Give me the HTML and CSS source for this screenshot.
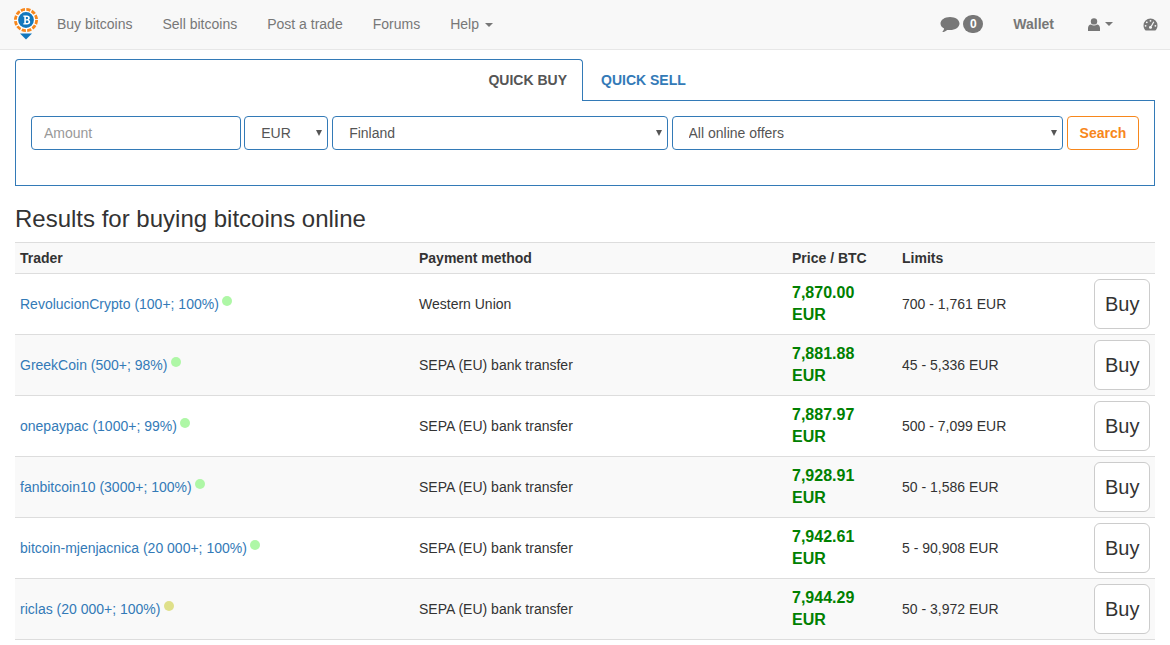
FILE: index.html
```html
<!DOCTYPE html>
<html lang="en">
<head>
<meta charset="utf-8">
<title>Buy bitcoins</title>
<link rel="stylesheet" href="styles.css">
</head>
<body>
<nav class="navbar">
  <a class="logo" href="#" aria-label="Home">
    <svg width="26" height="32" viewBox="0 0 26 32">
      <circle cx="13" cy="12" r="10.600" fill="#fff" stroke="#f7871c" stroke-width="2.800" stroke-dasharray="4.200 1.350"/>
      <circle cx="13" cy="12" r="7.900" fill="#1277bd"/>
      <path d="M10.300 7.600h3.600c1.800 0 2.900.9 2.900 2.300 0 .9-.5 1.600-1.200 1.900.9.3 1.600 1.100 1.600 2.200 0 1.600-1.200 2.500-3.100 2.500h-3.800v-1.200h1v-6.500h-1zm2.600 1.300v2.300h.9c.8 0 1.300-.4 1.300-1.200 0-.7-.5-1.100-1.300-1.100zm0 3.500v2.700h1.100c.9 0 1.500-.5 1.500-1.400s-.6-1.300-1.500-1.300z" fill="#fff"/>
      <path d="M7 25.500h12l-6 6z" fill="#1277bd"/>
    </svg>
  </a>
  <ul class="nav-left">
    <li><a href="#">Buy bitcoins</a></li>
    <li><a href="#">Sell bitcoins</a></li>
    <li><a href="#">Post a trade</a></li>
    <li><a href="#">Forums</a></li>
    <li><a href="#">Help <span class="caret"></span></a></li>
  </ul>
  <ul class="nav-right">
    <li class="nav-chat">
      <svg class="ico-chat" width="20" height="17" viewBox="0 0 20 17"><path d="M10 1C4.700 1 .5 3.900.5 7.500c0 2.100 1.400 3.900 3.600 5.100-.2 1.300-.9 2.500-1.900 3.400 1.900-.1 3.700-.9 5-2.100.9.2 1.800.2 2.800.2 5.300 0 9.500-2.900 9.500-6.600S15.300 1 10 1z" fill="#777"/></svg>
      <span class="badge">0</span>
    </li>
    <li class="nav-wallet"><a href="#">Wallet</a></li>
    <li class="nav-user">
      <svg width="12" height="13" viewBox="0 0 12 13"><circle cx="6" cy="3.400" r="3.200" fill="#777"/><path d="M0 13v-3c0-2 1.300-3.300 3-3.500.8.600 1.900 1 3 1s2.200-.4 3-1c1.700.2 3 1.500 3 3.500v3z" fill="#777"/></svg>
      <span class="caret"></span>
    </li>
    <li class="nav-gauge">
      <svg width="15" height="13" viewBox="0 0 15 13"><path d="M7.500 0.500A7 7 0 0 0 .5 7.500c0 2 .8 3.700 2.100 5h9.800c1.300-1.300 2.100-3 2.100-5a7 7 0 0 0-7-7z" fill="#777"/><circle cx="7.500" cy="2.800" r=".9" fill="#f8f8f8"/><circle cx="3.800" cy="4.300" r=".9" fill="#f8f8f8"/><circle cx="2.600" cy="7.800" r=".9" fill="#f8f8f8"/><circle cx="12.400" cy="7.800" r=".9" fill="#f8f8f8"/><path d="M10.800 3.800L8.300 8.200" stroke="#f8f8f8" stroke-width="1.200"/><circle cx="7.500" cy="9.300" r="1.500" fill="#f8f8f8"/></svg>
    </li>
  </ul>
</nav>

<main class="container">
  <section class="quick">
    <div class="tabs">
      <a class="tab-active" href="#">QUICK BUY</a>
      <div class="tab-rest"><a class="tab" href="#">QUICK SELL</a></div>
    </div>
    <form class="panel">
      <input class="field f-amount" type="text" placeholder="Amount">
      <select class="field pick f-cur"><option>EUR</option></select>
      <select class="field pick f-country"><option>Finland</option></select>
      <select class="field pick f-offers"><option>All online offers</option></select>
      <button class="search" type="button">Search</button>
    </form>
  </section>

  <h3 class="title">Results for buying bitcoins online</h3>

  <table class="results">
    <colgroup>
      <col class="c-trader"><col class="c-pay"><col class="c-price"><col class="c-limit"><col class="c-act">
    </colgroup>
    <thead>
      <tr><th>Trader</th><th>Payment method</th><th>Price / BTC</th><th>Limits</th><th></th></tr>
    </thead>
    <tbody>
      <tr>
        <td><a href="#">RevolucionCrypto (100+; 100%)</a> <span class="dot"></span></td>
        <td>Western Union</td><td class="price">7,870.00 EUR</td><td>700 - 1,761 EUR</td>
        <td class="act"><a class="buy" href="#">Buy</a></td>
      </tr>
      <tr>
        <td><a href="#">GreekCoin (500+; 98%)</a> <span class="dot"></span></td>
        <td>SEPA (EU) bank transfer</td><td class="price">7,881.88 EUR</td><td>45 - 5,336 EUR</td>
        <td class="act"><a class="buy" href="#">Buy</a></td>
      </tr>
      <tr>
        <td><a href="#">onepaypac (1000+; 99%)</a> <span class="dot"></span></td>
        <td>SEPA (EU) bank transfer</td><td class="price">7,887.97 EUR</td><td>500 - 7,099 EUR</td>
        <td class="act"><a class="buy" href="#">Buy</a></td>
      </tr>
      <tr>
        <td><a href="#">fanbitcoin10 (3000+; 100%)</a> <span class="dot"></span></td>
        <td>SEPA (EU) bank transfer</td><td class="price">7,928.91 EUR</td><td>50 - 1,586 EUR</td>
        <td class="act"><a class="buy" href="#">Buy</a></td>
      </tr>
      <tr>
        <td><a href="#">bitcoin-mjenjacnica (20 000+; 100%)</a> <span class="dot"></span></td>
        <td>SEPA (EU) bank transfer</td><td class="price">7,942.61 EUR</td><td>5 - 90,908 EUR</td>
        <td class="act"><a class="buy" href="#">Buy</a></td>
      </tr>
      <tr>
        <td><a href="#">riclas (20 000+; 100%)</a> <span class="dot dot-warm"></span></td>
        <td>SEPA (EU) bank transfer</td><td class="price">7,944.29 EUR</td><td>50 - 3,972 EUR</td>
        <td class="act"><a class="buy" href="#">Buy</a></td>
      </tr>
    </tbody>
  </table>
</main>
</body>
</html>
```
FILE: styles.css
```css
* { box-sizing: border-box; }
html, body { margin: 0; height: 100%; overflow: hidden; }
body {
  font-family: "Liberation Sans", Arial, sans-serif;
  font-size: 14px;
  line-height: 20px;
  color: #333;
  background: #fff;
}
a { text-decoration: none; color: #337ab7; }
ul { list-style: none; margin: 0; padding: 0; }

.navbar {
  display: flex;
  align-items: center;
  height: 50px;
  padding-bottom: 1px;
  background: #f8f8f8;
  border-bottom: 1px solid #e7e7e7;
}
.logo { display: block; width: 26px; height: 32px; margin: 0 3px 0 13px; }
.logo svg { display: block; }
.nav-left { display: flex; }
.nav-left a { display: block; padding: 0 15px; color: #777; }
.caret {
  display: inline-block;
  width: 0;
  height: 0;
  margin-left: 2px;
  vertical-align: middle;
  border-top: 4px solid #777;
  border-left: 4px solid transparent;
  border-right: 4px solid transparent;
}
.nav-right { display: flex; align-items: center; margin-left: auto; padding-right: 12px; color: #777; }
.nav-chat { display: flex; align-items: center; }
.ico-chat { display: block; margin-right: 3px; }
.badge {
  width: 20px;
  height: 18px;
  border-radius: 9px;
  background: #777;
  color: #fff;
  font-size: 12px;
  font-weight: 700;
  line-height: 18px;
  text-align: center;
}
.nav-wallet { margin-left: 30px; }
.nav-wallet a { color: #777; font-weight: 700; }
.nav-user { display: flex; align-items: center; gap: 3px; margin-left: 34px; }
.nav-user svg, .nav-gauge svg { display: block; }
.nav-gauge { margin-left: 30px; }

.container { padding: 9px 15px 0; }

.tabs { display: flex; height: 42px; }
.tab-active {
  width: 568px;
  height: 42px;
  padding: 10px 15px 0 0;
  border: 1px solid #337ab7;
  border-bottom: 0;
  border-radius: 4px 4px 0 0;
  color: #555;
  font-weight: 700;
  text-align: right;
}
.tab-rest { flex: 1; border-bottom: 1px solid #337ab7; }
.tab { display: block; width: 121px; padding: 11px 0 0 18px; font-weight: 700; }
.panel {
  display: flex;
  align-items: flex-start;
  gap: 3.89px;
  height: 85px;
  padding: 15px 15px 0;
  border: 1px solid #337ab7;
  border-top: 0;
}
.field {
  height: 34px;
  padding: 6px 12px;
  border: 1px solid #337ab7;
  border-radius: 4px;
  background: #fff;
  color: #555;
  font: 14px/20px "Liberation Sans", Arial, sans-serif;
  outline: none;
}
.field::placeholder { color: #999; opacity: 1; }
.pick {
  appearance: none;
  -webkit-appearance: none;
  padding-left: 16px;
  background-image: url("data:image/svg+xml,%3Csvg xmlns='http://www.w3.org/2000/svg' width='6' height='6'%3E%3Cpath d='M0 0h6L3 6z' fill='%23555'/%3E%3C/svg%3E");
  background-repeat: no-repeat;
  background-position: right 5px center;
}
.f-amount { width: 210px; margin-right: -0.6px; }
.f-cur { width: 84px; }
.f-country { width: 336px; }
.f-offers { width: 391px; padding-left: 15.500px; }
.search {
  width: 72px;
  height: 34px;
  padding: 0;
  border: 1px solid #f7871c;
  border-radius: 4px;
  background: #fff;
  color: #f7871c;
  font: 700 14px/20px "Liberation Sans", Arial, sans-serif;
}

.title {
  margin: 20px 0 10px;
  font-size: 24px;
  font-weight: 500;
  line-height: 26px;
  color: #333;
}

.results { width: 1140px; border-collapse: collapse; table-layout: fixed; }
.c-trader { width: 399px; }
.c-pay { width: 373px; }
.c-price { width: 110px; }
.c-limit { width: 192px; }
.c-act { width: 66px; }
.results th {
  height: 31px;
  padding: 5px;
  background: #f9f9f9;
  border-top: 1px solid #ddd;
  border-bottom: 1px solid #ddd;
  text-align: left;
  font-weight: 700;
}
.results td {
  padding: 5px;
  border-bottom: 1px solid #ddd;
  vertical-align: middle;
}
.results tbody tr:nth-child(even) { background: #f9f9f9; }
.results .price { font-size: 16px; font-weight: 700; line-height: 22px; color: #008000; }
.results .act { text-align: right; }
.buy {
  display: inline-block;
  vertical-align: middle;
  padding: 10px;
  border: 1px solid #ccc;
  border-radius: 6px;
  background: #fff;
  color: #333;
  font-size: 20px;
  line-height: 28px;
}
.dot {
  display: inline-block;
  width: 10px;
  height: 10px;
  margin-left: -0.5px;
  border-radius: 50%;
  background: #aef7a6;
  vertical-align: 3px;
}
.dot-warm { background: #dfe08a; }
```
